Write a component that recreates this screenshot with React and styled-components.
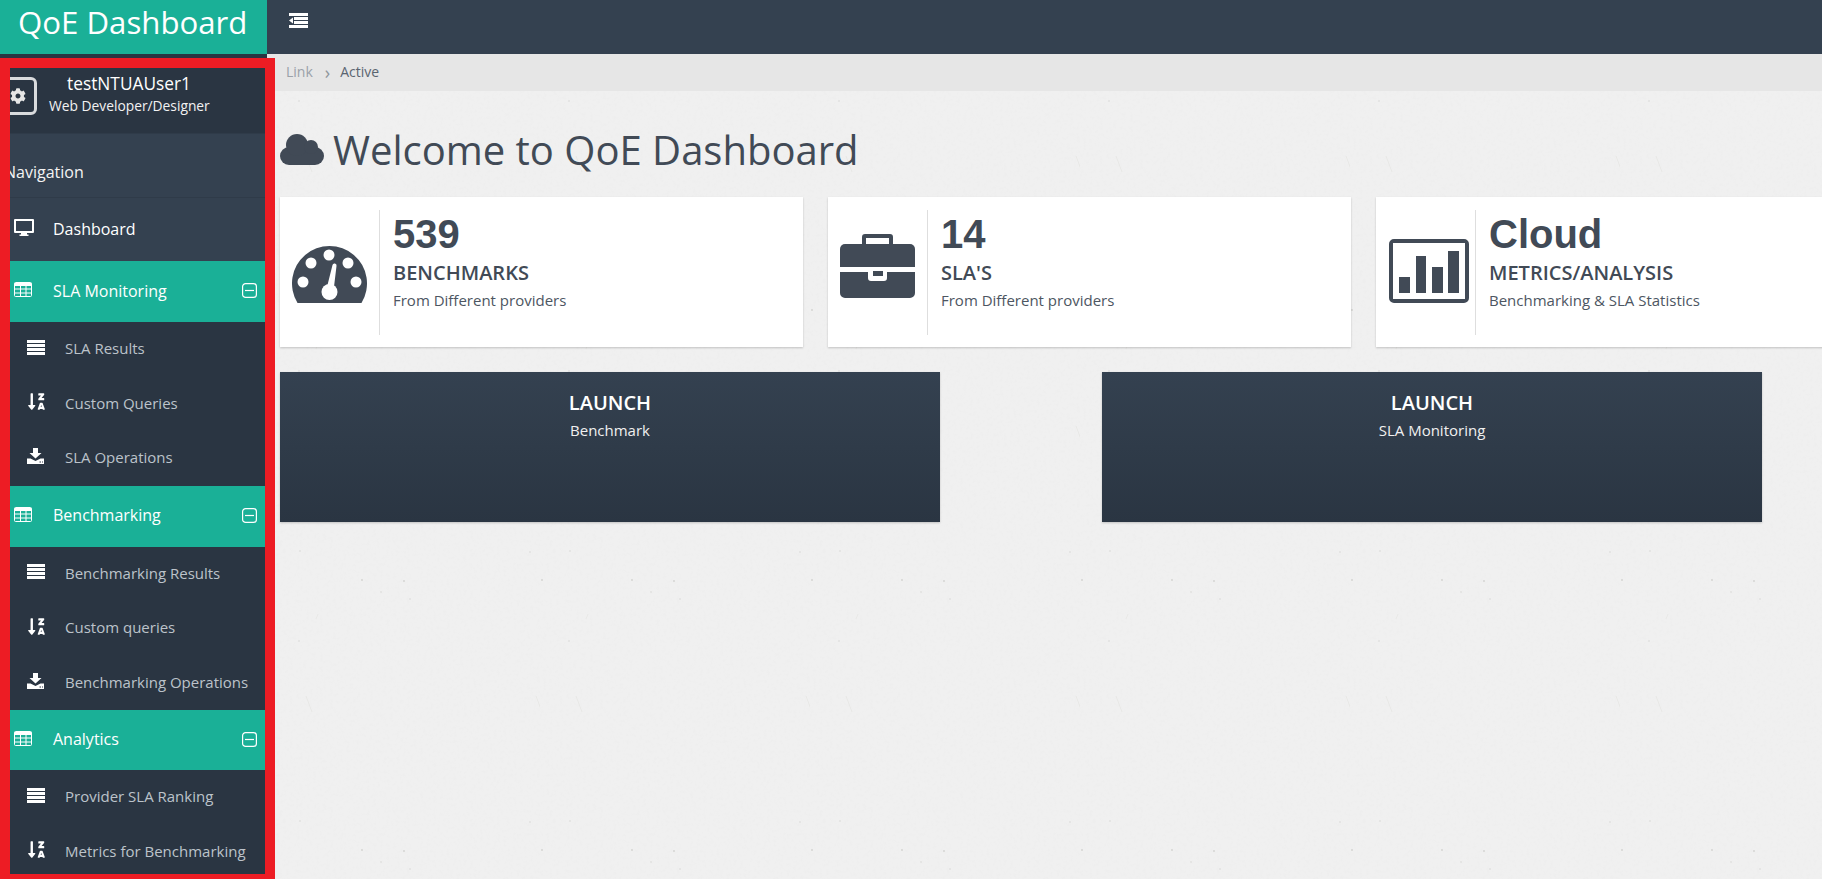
import React from "react";
import styled, { createGlobalStyle } from "styled-components";
import { FaSortAlphaDownAlt, FaCog } from "react-icons/fa";

const GlobalStyle = createGlobalStyle`
  html, body { margin: 0; padding: 0; height: 100%; overflow: hidden; }
  body { font-family: "Open Sans", "Liberation Sans", sans-serif; background: #f0f0f0; }
  * { box-sizing: border-box; }
`;

const noise = `url("data:image/svg+xml,%3Csvg xmlns='http://www.w3.org/2000/svg' width='270' height='270'%3E%3Cfilter id='n'%3E%3CfeTurbulence type='fractalNoise' baseFrequency='.3' numOctaves='2' seed='4' stitchTiles='stitch'/%3E%3CfeColorMatrix values='0 0 0 0 .5 0 0 0 0 .5 0 0 0 0 .5 .6 0 0 0 -.28'/%3E%3C/filter%3E%3Crect width='270' height='270' filter='url(%23n)' opacity='.14'/%3E%3Cg fill='%23d2d2d0'%3E%3Ccircle cx='2' cy='40' r='.9'/%3E%3Ccircle cx='92' cy='40' r='.9'/%3E%3Ccircle cx='134' cy='41' r='.9'/%3E%3Ccircle cx='111' cy='52' r='.7'/%3E%3Ccircle cx='140' cy='59' r='.7'/%3E%3Ccircle cx='30' cy='11' r='.7'/%3E%3Ccircle cx='29' cy='101' r='.7'/%3E%3Ccircle cx='260' cy='12' r='.7'/%3E%3C/g%3E%3Cpath d='M36 156l6 16M266 156l6 16M48 74l-2 5' stroke='%23e8e8e6' fill='none'/%3E%3C/svg%3E")`;

const Page = styled.div`
  position: relative;
  width: 1822px;
  height: 879px;
  overflow: hidden;
  display: grid;
  grid-template-columns: 267px 1fr;
  grid-template-rows: 54px 1fr;
  background-color: #f0f0f0;
  background-image: ${noise};
`;

const Brand = styled.div`
  background: #1ab097;
  color: #fff;
  font-size: 31.2px;
  line-height: 44px;
  padding-left: 18px;
  white-space: nowrap;
`;

const TopBar = styled.header`
  background: #344150;
  padding: 13px 0 0 22px;
  line-height: 0;
`;

const RedFrame = styled.div`
  position: absolute;
  left: 0;
  top: 58px;
  width: 275px;
  height: 826px;
  border: 10px solid #ed1c24;
  pointer-events: none;
`;

const Sidebar = styled.aside`
  background: #344150;
  display: flex;
  flex-direction: column;
  overflow: hidden;
`;

const UserPanel = styled.div`
  background: #2a3542;
  height: 81px;
  padding-top: 23px;
  display: flex;
  align-items: flex-start;
  gap: 12px;
  border-bottom: 1px solid #2f3b49;
`;

const GearBox = styled.div`
  width: 38px;
  height: 38px;
  margin-left: -1px;
  border: 3px solid #d9dbdd;
  border-radius: 6px;
  color: #e6e6e6;
  display: flex;
  align-items: center;
  justify-content: center;
  font-size: 16px;
`;

const UserText = styled.div`
  width: 160px;
  margin-top: -4px;
  color: #fff;
  text-align: center;
  white-space: nowrap;
`;

const UserName = styled.div`
  font-size: 17.3px;
  line-height: 22px;
`;

const UserRole = styled.div`
  font-size: 13.8px;
  line-height: 22px;
  color: #f2f2f2;
`;

const NavHeading = styled.div`
  height: 64px;
  padding: 12px 0 0 4px;
  display: flex;
  align-items: center;
  font-size: 16px;
  color: #f4f4f4;
  border-bottom: 1px solid #2f3b49;
`;

const NavRow = styled.div`
  height: ${(p) => p.$h}px;
  flex: none;
  display: flex;
  align-items: center;
  padding: 0 10px 2px 14px;
  font-size: 16px;
  color: #fff;
  background: ${(p) => (p.$active ? "#1ab097" : "transparent")};
  white-space: nowrap;
`;

const SubRow = styled.div`
  height: 54.5px;
  flex: none;
  display: flex;
  align-items: center;
  padding: 0 0 2px 27px;
  font-size: 15px;
  color: #bcc3ca;
  background: #2a3542;
  white-space: nowrap;
`;

const RowIcon = styled.span`
  width: ${(p) => p.$w}px;
  flex: none;
  display: flex;
  align-items: center;
  color: #fff;
  margin-top: -2px;
`;

const Toggle = styled.span`
  margin-left: auto;
  display: flex;
`;

const Main = styled.main`
  min-width: 0;
`;

const Breadcrumb = styled.nav`
  height: 37px;
  background: #e6e6e6;
  padding: 0 0 2px 19px;
  display: flex;
  align-items: center;
  font-size: 14px;
  color: #9aa1a9;
`;

const CrumbSep = styled.span`
  margin: 0 10px 0 12px;
  color: #8f959c;
  font-size: 18px;
  line-height: 1;
`;

const CrumbActive = styled.span`
  color: #5a6470;
`;

const Content = styled.div`
  padding: 36px 0 0 13px;
`;

const Title = styled.h1`
  margin: 0;
  height: 70px;
  padding-bottom: 26px;
  display: flex;
  align-items: center;
  gap: 9px;
  font-size: 40px;
  font-weight: 400;
  color: #414a56;
  white-space: nowrap;
`;

const Cards = styled.div`
  display: flex;
  gap: 25px;
`;

const Card = styled.section`
  flex: none;
  width: 523px;
  height: 150px;
  background: #fff;
  box-shadow: 0 1px 2px rgba(0, 0, 0, 0.2);
  padding-top: 13px;
  display: flex;
  color: #414a56;
`;

const CardIcon = styled.div`
  width: 100px;
  height: 125px;
  flex: none;
  border-right: 1px solid #dedede;
  display: flex;
  justify-content: flex-start;
  padding-left: ${(p) => p.$x}px;
  padding-top: ${(p) => p.$y}px;
`;

const CardBody = styled.div`
  padding: 1px 0 0 13px;
  white-space: nowrap;
`;

const Big = styled.div`
  font-family: "Liberation Sans", Arial, sans-serif;
  font-weight: 700;
  font-size: 40px;
  line-height: 46px;
`;

const CardTitle = styled.div`
  font-size: 20px;
  font-weight: 600;
  line-height: 26px;
  margin-top: 3px;
`;

const CardText = styled.div`
  font-size: 15px;
  line-height: 22px;
  margin-top: 3px;
  color: #4d5662;
`;

const Launches = styled.div`
  display: flex;
  gap: 162px;
  margin-top: 25px;
`;

const Launch = styled.section`
  flex: none;
  width: 660px;
  height: 150px;
  background: linear-gradient(to bottom, #344150, #2a3542);
  box-shadow: 0 1px 2px rgba(0, 0, 0, 0.2);
  color: #fff;
  text-align: center;
  padding-top: 18px;
`;

const LaunchTitle = styled.div`
  font-size: 20px;
  font-weight: 600;
  line-height: 26px;
`;

const LaunchText = styled.div`
  font-size: 15px;
  line-height: 22px;
  margin-top: 3px;
  color: #f0f0f0;
`;

const I = {
  Indent: () => (
    <svg width="19" height="15" viewBox="0 0 19 15" fill="#fff">
      <rect width="19" height="3" />
      <rect x="5" y="4" width="14" height="3" />
      <rect x="5" y="8" width="14" height="3" />
      <rect y="12" width="19" height="3" />
      <path d="M4 4.500v6L0 7.500z" />
    </svg>
  ),
  Desktop: () => (
    <svg width="20" height="17" viewBox="0 0 20 17" fill="#fff">
      <path fillRule="evenodd" d="M1 0h18a1 1 0 0 1 1 1v12a1 1 0 0 1-1 1H1a1 1 0 0 1-1-1V1a1 1 0 0 1 1-1zM2 2v10h16V2z" />
      <rect x="7" y="14" width="6" height="2" />
      <rect x="5.500" y="15.500" width="9" height="1.500" />
    </svg>
  ),
  Table: () => (
    <svg width="18" height="15" viewBox="0 0 18 15" fill="none" stroke="#fff" strokeWidth="1">
      <rect x=".5" y=".5" width="17" height="14" rx="1" />
      <path d="M.5 3.500h17M.5 7h17M.5 11h17M6.500 3.500v11M12 3.500v11" />
      <path d="M.5 2h17" strokeWidth="2" />
    </svg>
  ),
  Lines: () => (
    <svg width="18" height="15" viewBox="0 0 18 15" fill="#fff">
      <rect width="18" height="3" />
      <rect y="4" width="18" height="3" />
      <rect y="8" width="18" height="3" />
      <rect y="12" width="18" height="3" />
    </svg>
  ),
  Sort: () => <FaSortAlphaDownAlt size={19} color="#fff" />,
  Download: () => (
    <svg width="17" height="16" viewBox="0 0 17 16" fill="#fff">
      <path d="M6 0h5v5h3.500l-6 5.500-6-5.500H6z" />
      <path fillRule="evenodd" d="M0 10.500h3.500L8.500 13l5-2.500H17V16H0zM12.500 13.500v1h1.500v-1zM15 13.500v1h1v-1z" />
    </svg>
  ),
  Minus: () => (
    <svg width="15" height="15" viewBox="0 0 15 15" fill="none" stroke="#fff" strokeWidth="1.200">
      <rect x=".6" y=".6" width="13.800" height="13.800" rx="3" />
      <path d="M3 7.500h9" />
    </svg>
  ),
  Cloud: () => (
    <svg width="44" height="31" viewBox="0 0 44 31" fill="#414a56">
      <rect y="13" width="44" height="18" rx="9" />
      <circle cx="17" cy="11" r="11" />
      <circle cx="31" cy="13" r="7" />
    </svg>
  ),
  Gauge: () => (
    <svg width="75" height="58" viewBox="0 0 75 58" fill="#414a56">
      <path d="M5.500 58A37.500 37.500 0 1 1 69.500 58z" />
      <g fill="#fff">
        <circle cx="37" cy="10" r="5.500" />
        <circle cx="19" cy="18" r="5.500" />
        <circle cx="56" cy="18" r="5.500" />
        <circle cx="11" cy="37" r="5.500" />
        <circle cx="64" cy="37" r="5.500" />
        <circle cx="37.500" cy="47" r="8" />
        <path d="M34.500 44l6-24a2 2 0 0 1 4 1l-3 25z" />
      </g>
    </svg>
  ),
  Briefcase: () => (
    <svg width="75" height="64" viewBox="0 0 75 64" fill="#414a56">
      <path fillRule="evenodd" d="M25 0h25a3 3 0 0 1 3 3v7h-4V4H26v6h-4V3a3 3 0 0 1 3-3z" />
      <path d="M5 10h65a5 5 0 0 1 5 5v18H0V15a5 5 0 0 1 5-5z" />
      <path d="M0 38h28v6a3 3 0 0 0 3 3h13a3 3 0 0 0 3-3v-6h28v21a5 5 0 0 1-5 5H5a5 5 0 0 1-5-5z" />
      <rect x="33" y="37" width="10" height="5" />
    </svg>
  ),
  Chart: () => (
    <svg width="80" height="64" viewBox="0 0 80 64" fill="#414a56">
      <path fillRule="evenodd" d="M5 0h70a5 5 0 0 1 5 5v54a5 5 0 0 1-5 5H5a5 5 0 0 1-5-5V5a5 5 0 0 1 5-5zM4 4v56h72V4z" />
      <rect x="10" y="38" width="11" height="16" />
      <rect x="27" y="17" width="10" height="37" />
      <rect x="43" y="28" width="11" height="26" />
      <rect x="59" y="12" width="11" height="42" />
    </svg>
  ),
};

const groups = [
  { name: "SLA Monitoring", h: 61, items: [["SLA Results", I.Lines], ["Custom Queries", I.Sort], ["SLA Operations", I.Download]] },
  { name: "Benchmarking", h: 61, items: [["Benchmarking Results", I.Lines], ["Custom queries", I.Sort], ["Benchmarking Operations", I.Download]] },
  { name: "Analytics", h: 60, items: [["Provider SLA Ranking", I.Lines], ["Metrics for Benchmarking", I.Sort]] },
];

const cards = [
  { big: "539", title: "BENCHMARKS", text: "From Different providers", Icon: I.Gauge, x: 12, y: 35 },
  { big: "14", title: "SLA'S", text: "From Different providers", Icon: I.Briefcase, x: 12, y: 24 },
  { big: "Cloud", title: "METRICS/ANALYSIS", text: "Benchmarking & SLA Statistics", Icon: I.Chart, x: 13, y: 29 },
];

export default function App() {
  return (
    <Page>
      <GlobalStyle />
      <Brand>QoE Dashboard</Brand>
      <TopBar><I.Indent /></TopBar>
      <Sidebar>
        <UserPanel>
          <GearBox><FaCog /></GearBox>
          <UserText>
            <UserName>testNTUAUser1</UserName>
            <UserRole>Web Developer/Designer</UserRole>
          </UserText>
        </UserPanel>
        <NavHeading>Navigation</NavHeading>
        <NavRow $h={63}>
          <RowIcon $w={39}><I.Desktop /></RowIcon>Dashboard
        </NavRow>
        {groups.map((g) => (
          <React.Fragment key={g.name}>
            <NavRow $h={g.h} $active>
              <RowIcon $w={39}><I.Table /></RowIcon>
              {g.name}
              <Toggle><I.Minus /></Toggle>
            </NavRow>
            {g.items.map(([label, Icon]) => (
              <SubRow key={label}>
                <RowIcon $w={38}><Icon /></RowIcon>
                {label}
              </SubRow>
            ))}
          </React.Fragment>
        ))}
      </Sidebar>
      <Main>
        <Breadcrumb>
          Link<CrumbSep>›</CrumbSep><CrumbActive>Active</CrumbActive>
        </Breadcrumb>
        <Content>
          <Title><I.Cloud />Welcome to QoE Dashboard</Title>
          <Cards>
            {cards.map((c) => (
              <Card key={c.big}>
                <CardIcon $x={c.x} $y={c.y}><c.Icon /></CardIcon>
                <CardBody>
                  <Big>{c.big}</Big>
                  <CardTitle>{c.title}</CardTitle>
                  <CardText>{c.text}</CardText>
                </CardBody>
              </Card>
            ))}
          </Cards>
          <Launches>
            <Launch><LaunchTitle>LAUNCH</LaunchTitle><LaunchText>Benchmark</LaunchText></Launch>
            <Launch><LaunchTitle>LAUNCH</LaunchTitle><LaunchText>SLA Monitoring</LaunchText></Launch>
          </Launches>
        </Content>
      </Main>
      <RedFrame />
    </Page>
  );
}
